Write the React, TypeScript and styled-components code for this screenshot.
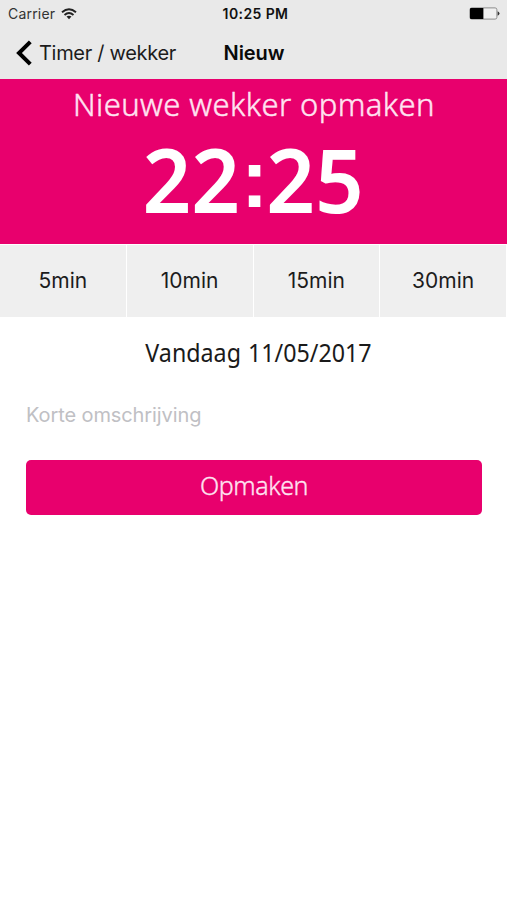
import React from "react";
import styled, { createGlobalStyle } from "styled-components";

const GlobalStyle = createGlobalStyle`
  * { box-sizing: border-box; }
  body { margin: 0; background: #fff; font-family: Inter, "Liberation Sans", sans-serif; color: #111; }
  button, input { font: inherit; border: 0; margin: 0; padding: 0; }
`;

const Screen = styled.main`
  display: flex;
  flex-direction: column;
  width: 507px;
  height: 900px;
  overflow: hidden;
  background: #fff;
`;

const Header = styled.header`
  height: 79px;
  background: #e9e9e9;
`;

const Columns = styled.div<{ $height: number }>`
  display: grid;
  grid-template-columns: 1fr auto 1fr;
  align-items: center;
  height: ${(p) => p.$height}px;
`;

const Carrier = styled.div`
  display: flex;
  align-items: center;
  gap: 6px;
  padding-left: 8px;
  font-size: 14px;
  letter-spacing: 0.2px;
  color: #333;
`;

const Clock = styled.div`
  font-size: 14px;
  font-weight: 600;
  letter-spacing: 0.4px;
  padding-left: 4px;
`;

const BatterySlot = styled.div`
  display: flex;
  justify-content: flex-end;
  padding-right: 7px;
`;

const Back = styled.button`
  display: flex;
  align-items: center;
  gap: 7px;
  padding-left: 16px;
  background: none;
  color: #1c1c1c;
  font-size: 20px;
  letter-spacing: -0.3px;
  white-space: nowrap;
`;

const NavTitle = styled.h1`
  margin: 0;
  padding-left: 1px;
  font-size: 20px;
  font-weight: 600;
  letter-spacing: -0.1px;
  color: #0a0a0a;
`;

const Hero = styled.section`
  display: flex;
  flex-direction: column;
  align-items: center;
  height: 165px;
  background: #e8006d;
  color: #fff;
  font-family: "Noto Sans", sans-serif;
`;

const HeroTitle = styled.h2`
  margin: 4px 0 0;
  padding-left: 1px;
  font-size: 31px;
  line-height: 42px;
  font-weight: 300;
  letter-spacing: 0.4px;
  color: #ffe3f1;
  -webkit-text-stroke: 0.45px #ffe3f1;
  white-space: nowrap;
`;

const Time = styled.div`
  display: flex;
  align-items: baseline;
  height: 108px;
  font-size: 88px;
  line-height: 108px;
  font-weight: 600;
  transform: scaleX(0.97);
`;

const Colon = styled.span`
  width: 27px;
  text-align: center;
  transform: translate(1px, -6px);
  font-family: "Liberation Sans", sans-serif;
  font-size: 84px;
  font-weight: 700;
`;

const Presets = styled.div`
  display: grid;
  grid-template-columns: repeat(4, 1fr);
  gap: 1px;
  height: 74px;
  padding: 1px 1px 1px 0;
`;

const Preset = styled.button`
  padding-bottom: 2px;
  background: #efefef;
  color: #1c1c1c;
  font-size: 21px;
`;

const DateLabel = styled.div`
  height: 70px;
  line-height: 68px;
  text-align: center;
  font-family: "Noto Sans", sans-serif;
  font-size: 25px;
  color: #1a1a1a;
  word-spacing: 1px;
  transform: translateX(5px) scaleX(0.93);
`;

const Form = styled.form`
  padding: 0 26px;
`;

const Description = styled.input`
  display: block;
  width: 100%;
  height: 52px;
  padding-top: 1px;
  background: none;
  outline: none;
  font-size: 20px;
  letter-spacing: -0.1px;
  &::placeholder { color: #c0c0c4; opacity: 1; }
`;

const Submit = styled.button`
  width: 456px;
  height: 55px;
  margin-top: 20px;
  padding-bottom: 5px;
  border-radius: 5px;
  background: #e8006d;
  color: #ffe3f1;
  font-family: "Noto Sans", sans-serif;
  font-size: 25px;
  font-weight: 300;
  letter-spacing: -0.4px;
  -webkit-text-stroke: 0.35px #ffe3f1;
`;

const Wifi = () => (
  <svg width="16" height="12" viewBox="0 0 16 12" fill="none" stroke="#222" strokeWidth="1.9">
    <path d="M1 4.2Q8-1.8 15 4.2M3.5 6.9Q8 3.1 12.5 6.9" />
    <path d="M5.5 8.6Q8 6.7 10.5 8.6L8 11.3Z" fill="#222" stroke="none" />
  </svg>
);

const Battery = () => (
  <svg width="31" height="13" viewBox="0 0 31 13">
    <rect x="0.9" y="0.9" width="27" height="11.2" rx="1.8" fill="#f0f0f0" stroke="#8d8d8d" />
    <path d="M2 1H14.4V12H2Q1 12 1 11V2Q1 1 2 1Z" fill="#000" />
    <path d="M28.6 4.3Q30.5 5 30.5 6.5T28.6 8.7Z" fill="#333" />
  </svg>
);

const Chevron = () => (
  <svg width="16" height="26" viewBox="0 0 16 26" fill="none" stroke="#000" strokeWidth="4">
    <path d="M14.3 1.8L3 13L14.3 24.2" />
  </svg>
);

export default function App() {
  return (
    <>
      <GlobalStyle />
      <Screen>
        <Header>
          <Columns $height={27}>
            <Carrier>Carrier <Wifi /></Carrier>
            <Clock>10:25 PM</Clock>
            <BatterySlot><Battery /></BatterySlot>
          </Columns>
          <Columns $height={51}>
            <Back><Chevron />Timer / wekker</Back>
            <NavTitle>Nieuw</NavTitle>
            <span />
          </Columns>
        </Header>
        <Hero>
          <HeroTitle>Nieuwe wekker opmaken</HeroTitle>
          <Time><span>22</span><Colon>:</Colon><span>25</span></Time>
        </Hero>
        <Presets>
          {[5, 10, 15, 30].map((minutes) => (
            <Preset key={minutes}>{minutes}min</Preset>
          ))}
        </Presets>
        <DateLabel>Vandaag 11/05/2017</DateLabel>
        <Form>
          <Description placeholder="Korte omschrijving" />
          <Submit type="button">Opmaken</Submit>
        </Form>
      </Screen>
    </>
  );
}
